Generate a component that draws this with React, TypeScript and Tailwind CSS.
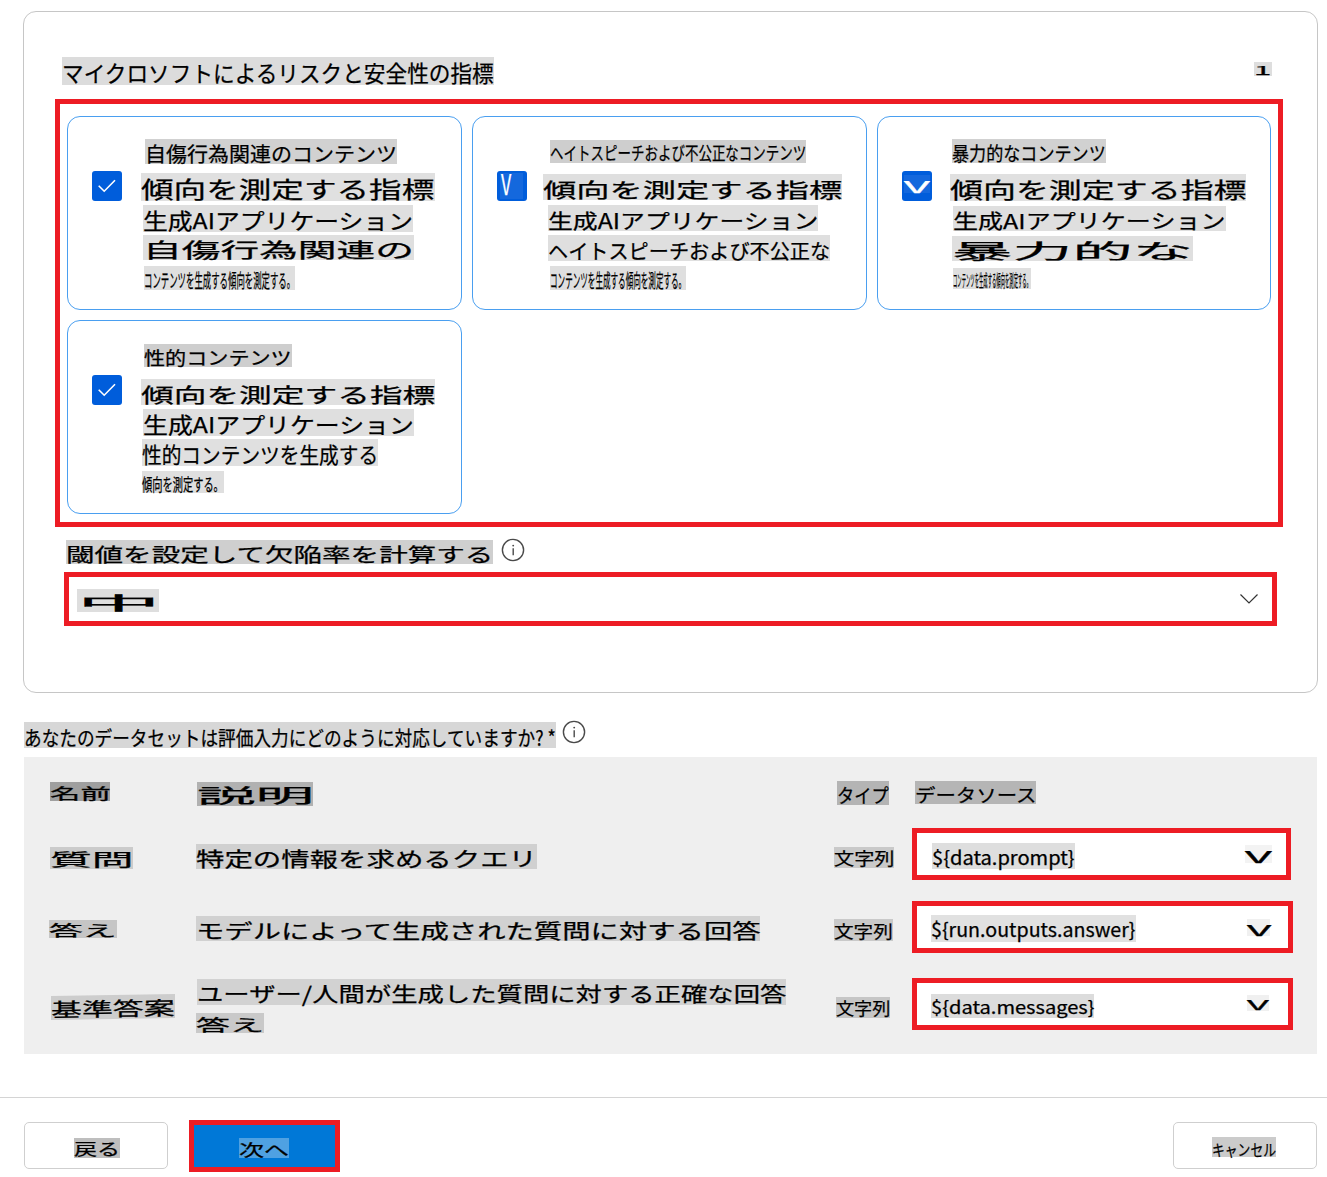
import { useLayoutEffect, useRef } from "react";
import type { ReactNode } from "react";

type FitProps = { text: string; className: string; descent?: number; nudge?: number };

/** One line of text stretched to fill its tinted box in both directions. */
function Fit({ text, className, descent = 0.09, nudge = 0 }: FitProps) {
  const box = useRef<HTMLDivElement>(null);
  const line = useRef<HTMLSpanElement>(null);
  useLayoutEffect(() => {
    const b = box.current;
    const l = line.current;
    if (!b || !l) return;
    l.style.fontSize = `${b.clientHeight / (1.16 + descent)}px`;
    l.style.transform = `translateY(${nudge}px) scaleX(${b.clientWidth / l.offsetWidth})`;
  }, [text, descent, nudge]);
  return (
    <div ref={box} className={`shrink-0 whitespace-nowrap ${className}`}>
      <span ref={line} className="block w-max origin-top-left leading-[1.448] [-webkit-text-stroke:0.25px_currentColor]">
        {text}
      </span>
    </div>
  );
}

function Info({ className }: { className: string }) {
  return (
    <svg viewBox="0 0 24 24" fill="none" className={`size-6 shrink-0 ${className}`}>
      <circle cx="12" cy="12" r="10.6" stroke="#4a4a4a" strokeWidth="1.4" />
      <path d="M12.2 10.3v7" stroke="#4a4a4a" strokeWidth="1.4" />
      <circle cx="12.2" cy="7.6" r="0.95" fill="#4a4a4a" />
    </svg>
  );
}

function Check() {
  return (
    <svg viewBox="0 0 30 30" fill="none" className="size-[30px]">
      <path d="M6.7 14.7 12.2 20.2 23 9.2" stroke="#fff" strokeWidth="1.6" />
    </svg>
  );
}

function Card({ mark, children }: { mark: ReactNode; children: ReactNode }) {
  return (
    <div className="flex h-[194px] rounded-[13px] border border-[#4a9ff0]">
      <div className="mt-[54px] ml-6 flex size-[30px] shrink-0 items-start rounded-[3px] bg-[#005ddb]">{mark}</div>
      <div className="flex flex-col">{children}</div>
    </div>
  );
}

export default function App() {
  return (
    <div className="h-[1177px] w-[1327px] overflow-hidden bg-white pt-[11px] font-['Noto_Sans_CJK_JP',sans-serif] text-black">
      <section className="ml-[23px] h-[682px] w-[1295px] rounded-[13px] border border-[#c6c6c6]">
        <div className="flex h-[87px] items-start justify-between pr-[45px] pl-[38px]">
          <Fit text="マイクロソフトによるリスクと安全性の指標" nudge={-1} className="mt-[45px] h-7 w-[432px] bg-[#dcdcdc]" />
          <Fit text="1" descent={0} nudge={-1} className="mt-[50px] h-[14px] w-[18px] bg-[#dedede]" />
        </div>

        <div className="ml-[31px] grid h-[428px] w-[1228px] grid-cols-[395px_395px_394px] content-start gap-[10px] border-[5px] border-[#ed1c24] pt-3 pl-[7px]">
          <Card mark={<Check />}>
            <Fit text="自傷行為関連のコンテンツ" nudge={1} className="mt-[22px] ml-[23px] h-[25px] w-[252px] bg-[#d1d1d1]" />
            <Fit text="傾向を測定する指標" nudge={-1} className="mt-[9px] ml-[19px] h-7 w-[294px] bg-[#e0e0e0]" />
            <Fit text="生成AIアプリケーション" nudge={-1} className="mt-1 ml-[21px] h-[27px] w-[270px] bg-[#dfdfdf]" />
            <Fit text="自傷行為関連の" nudge={1} className="mt-[3px] ml-[21px] h-[25px] w-[271px] bg-[#dfdfdf]" />
            <Fit text="コンテンツを生成する傾向を測定する。" nudge={1} className="mt-[6px] ml-[22px] h-6 w-[151px] bg-[#dfdfdf]" />
          </Card>
          <Card
            mark={
              <div className="mt-[2px] ml-[3px] h-[26px] w-[23px] bg-[#1468dd]">
                <Fit text="V" descent={0} className="-mt-[11px] ml-px h-[33px] w-[10px] text-white" />
              </div>
            }
          >
            <Fit text="ヘイトスピーチおよび不公正なコンテンツ" nudge={-1} className="mt-[23px] ml-[23px] h-[23px] w-[256px] bg-[#cecece]" />
            <Fit text="傾向を測定する指標" className="mt-[11px] ml-4 h-[26px] w-[299px] bg-[#dfdfdf]" />
            <Fit text="生成AIアプリケーション" className="mt-[5px] ml-[21px] h-[26px] w-[270px] bg-[#dfdfdf]" />
            <Fit text="ヘイトスピーチおよび不公正な" className="mt-1 ml-[21px] h-[26px] w-[282px] bg-[#dfdfdf]" />
            <Fit text="コンテンツを生成する傾向を測定する。" nudge={1} className="mt-[5px] ml-[23px] h-6 w-[136px] bg-[#dfdfdf]" />
          </Card>
          <Card
            mark={<Fit text="V" descent={0} className="mt-[4px] ml-[2px] h-[18px] w-[26px] bg-[#1468dd] text-white" />}
          >
            <Fit text="暴力的なコンテンツ" nudge={1} className="mt-[22px] ml-5 h-6 w-[154px] bg-[#d1d1d1]" />
            <Fit text="傾向を測定する指標" nudge={-1} className="mt-[11px] ml-[18px] h-[27px] w-[296px] bg-[#e0e0e0]" />
            <Fit text="生成AIアプリケーション" nudge={1} className="mt-[5px] ml-[21px] h-[25px] w-[273px] bg-[#dfdfdf]" />
            <Fit text="暴力的な" nudge={1} className="mt-[5px] ml-5 h-[25px] w-[241px] bg-[#dfdfdf]" />
            <Fit text="コンテンツを生成する傾向を測定する。" className="mt-[7px] ml-[21px] h-[21px] w-[78px] bg-[#dfdfdf]" />
          </Card>
          <Card mark={<Check />}>
            <Fit text="性的コンテンツ" className="mt-[23px] ml-[22px] h-[23px] w-[148px] bg-[#cecece]" />
            <Fit text="傾向を測定する指標" className="mt-3 ml-[19px] h-[26px] w-[294px] bg-[#e0e0e0]" />
            <Fit text="生成AIアプリケーション" nudge={-1} className="mt-1 ml-[21px] h-[27px] w-[271px] bg-[#dfdfdf]" />
            <Fit text="性的コンテンツを生成する" nudge={-1} className="mt-[3px] ml-5 h-[27px] w-[236px] bg-[#e0e0e0]" />
            <Fit text="傾向を測定する。" className="mt-[5px] ml-5 h-[22px] w-[82px] bg-[#dfdfdf]" />
          </Card>
        </div>

        <div className="flex h-[45px] items-start pl-[42px]">
          <Fit text="閾値を設定して欠陥率を計算する" nudge={1} className="mt-[13px] h-6 w-[427px] bg-[#cfcfcf]" />
          <Info className="mt-[11px] ml-2" />
        </div>
        <div className="ml-10 flex h-[54px] w-[1213px] items-start justify-between border-[5px] border-[#ed1c24] pr-[13px] pl-2">
          <Fit text="中" className="mt-3 h-[23px] w-[82px] bg-[#dedede]" />
          <svg viewBox="0 0 20 12" fill="none" className="mt-4 h-3 w-5">
            <path d="M1.5 1.5 10 10 18.5 1.5" stroke="#333" strokeWidth="1.2" />
          </svg>
        </div>
      </section>

      <div className="flex h-16 items-start pl-6">
        <Fit text="あなたのデータセットは評価入力にどのように対応していますか? *" className="mt-[29px] h-[26px] w-[532px] bg-[#d7d7d7]" />
        <Info className="mt-[27px] ml-[6px]" />
      </div>

      <section className="ml-6 h-[297px] w-[1293px] bg-[#efefef]">
        <div className="flex h-[71px] items-start">
          <div className="w-[172px] shrink-0 pt-[25px] pl-[26px]">
            <Fit text="名前" nudge={-1} className="h-[19px] w-[60px] bg-[#9f9f9f]" />
          </div>
          <div className="w-[638px] shrink-0 pt-[25px] pl-px">
            <Fit text="説明" className="h-6 w-[116px] bg-[#b1b1b1]" />
          </div>
          <div className="w-[78px] shrink-0 pt-6 pl-[3px]">
            <Fit text="タイプ" nudge={1} className="h-6 w-[52px] bg-[#b4b4b4]" />
          </div>
          <div className="pt-6 pl-[3px]">
            <Fit text="データソース" className="h-[23px] w-[121px] bg-[#b5b5b5]" />
          </div>
        </div>

        <div className="flex h-[73px] items-start">
          <div className="w-[172px] shrink-0 pt-[19px] pl-[26px]">
            <Fit text="質問" nudge={-1} className="h-[22px] w-[83px] bg-[#cbcbcb]" />
          </div>
          <div className="w-[638px] shrink-0 pt-4">
            <Fit text="特定の情報を求めるクエリ" nudge={1} className="h-[25px] w-[341px] bg-[#d0d0d0]" />
          </div>
          <div className="w-[78px] shrink-0 pt-[19px]">
            <Fit text="文字列" nudge={-1} className="h-[21px] w-[60px] bg-[#c9c9c9]" />
          </div>
          <div className="flex h-[52px] w-[379px] items-start justify-between border-[5px] border-[#ed1c24] bg-white pr-[14px] pl-[15px]">
            <Fit text="${data.prompt}" descent={0.22} className="mt-[10px] h-[26px] w-[143px] bg-[#dedede]" />
            <Fit text="V" descent={0} className="mt-3 h-[18px] w-[27px] bg-[#f3f3f3]" />
          </div>
        </div>

        <div className="flex h-[77px] items-start">
          <div className="w-[172px] shrink-0 pt-[19px] pl-[25px]">
            <Fit text="答え" className="h-[18px] w-[68px] bg-[#c5c5c5]" />
          </div>
          <div className="w-[638px] shrink-0 pt-[15px]">
            <Fit text="モデルによって生成された質問に対する回答" nudge={1} className="h-[25px] w-[564px] bg-[#d1d1d1]" />
          </div>
          <div className="w-[78px] shrink-0 pt-[18px]">
            <Fit text="文字列" nudge={-1} className="h-[22px] w-[59px] bg-[#c9c9c9]" />
          </div>
          <div className="flex h-[52px] w-[381px] items-start justify-between border-[5px] border-[#ed1c24] bg-white pr-[18px] pl-[14px]">
            <Fit text="${run.outputs.answer}" descent={0.22} className="mt-[9px] h-[27px] w-[205px] bg-[#e1e1e1]" />
            <Fit text="V" descent={0} className="mt-[13px] h-[17px] w-[23px] bg-[#f0f0f0]" />
          </div>
        </div>

        <div className="flex items-start">
          <div className="w-[172px] shrink-0 pt-[17px] pl-[27px]">
            <Fit text="基準答案" className="h-6 w-[124px] -skew-y-1 bg-[#cdcdcd]" />
          </div>
          <div className="w-[638px] shrink-0 pt-px">
            <Fit text="ユーザー/人間が生成した質問に対する正確な回答" nudge={-1} className="ml-px h-[26px] w-[589px] bg-[#d2d2d2]" />
            <Fit text="答え" className="mt-2 h-5 w-[68px] bg-[#c9c9c9]" />
          </div>
          <div className="w-[78px] shrink-0 pt-[19px] pl-[2px]">
            <Fit text="文字列" nudge={-1} className="h-[21px] w-[54px] bg-[#c6c6c6]" />
          </div>
          <div className="flex h-[52px] w-[381px] items-start justify-between border-[5px] border-[#ed1c24] bg-white pr-[19px] pl-[14px]">
            <Fit text="${data.messages}" descent={0.22} className="mt-[11px] h-[24px] w-[163px] bg-[#dcdcdc]" />
            <Fit text="V" descent={0} className="mt-3 h-4 w-[22px] bg-[#f0f0f0]" />
          </div>
        </div>
      </section>

      <footer className="mt-[43px] flex items-start border-t border-[#d4d4d4] pl-6">
        <button className="mt-6 flex h-[47px] w-36 items-start rounded-[5px] border border-[#cfcfcf] pl-[49px]">
          <Fit text="戻る" nudge={-1} className="mt-[15px] h-5 w-[46px] bg-[#bebebe]" />
        </button>
        <button className="mt-[22px] ml-[21px] flex h-[52px] w-[151px] items-start border-[5px] border-[#ed1c24] bg-[#0078d7] pl-[45px]">
          <Fit text="次へ" className="mt-[13px] h-5 w-[50px] bg-[#4fa1e2]" />
        </button>
        <button className="mt-6 ml-[833px] flex h-[47px] w-36 items-start rounded-[5px] border border-[#cfcfcf] pl-[38px]">
          <Fit text="キャンセル" nudge={1} className="mt-[14px] h-5 w-16 bg-[#cbcbcb]" />
        </button>
      </footer>
    </div>
  );
}
